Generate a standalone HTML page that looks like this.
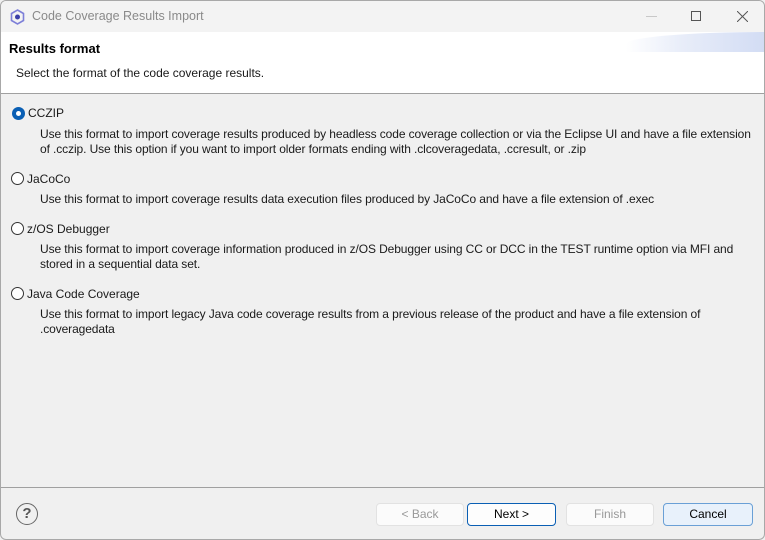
<!DOCTYPE html>
<html><head><meta charset="utf-8"><style>
*{margin:0;padding:0;box-sizing:border-box}
body{width:765px;height:540px;overflow:hidden;background:#f0f0f0;font-family:"Liberation Sans",sans-serif;font-size:12px;color:#1a1a1a;position:relative}
.win{position:absolute;left:0;top:0;width:765px;height:540px;border:1px solid #a8a8a8;border-radius:6px;overflow:hidden;background:#f0f0f0}
.title{position:absolute;left:0;top:0;width:765px;height:31px;background:#f3f3f3}
.title span{position:absolute;left:31px;top:8px;color:#8a8a8a;font-size:12.5px}
.hdr{position:absolute;left:0;top:31px;width:765px;height:62px;background:#fff;border-bottom:1px solid #a0a0a0}
.grad{position:absolute;right:0;top:0;width:140px;height:20px;background:linear-gradient(90deg,rgba(230,236,250,0) 0%,#e8edf9 40%,#d2dcf4 100%);border-top-left-radius:140px 12px}
.t{position:absolute;white-space:nowrap}
.d{letter-spacing:-0.1px}
.radio{position:absolute;width:13px;height:13px;border:1px solid #333;border-radius:50%;background:#fff}
.radio.on{border:none;background:#0a5fb4}
.radio.on:after{content:"";position:absolute;left:4px;top:4px;width:5px;height:5px;border-radius:50%;background:#fff}
.sep{position:absolute;left:0;top:486px;width:765px;height:1px;background:#a0a0a0}
.btn{position:absolute;top:502px;height:23px;border:1px solid #d0d0d0;border-radius:4px;background:#fbfbfb;text-align:center;line-height:21px;font-size:12px}
</style></head><body><div class="win">
<div class="title">
<svg style="position:absolute;left:9px;top:8px" width="15" height="16" viewBox="0 0 15 16"><path d="M7.5 1L13.5 4.5V11.5L7.5 15L1.5 11.5V4.5Z" fill="none" stroke="#7d7fd8" stroke-width="1.6"/><circle cx="7.5" cy="8" r="2.5" fill="#3b3fa8"/></svg>
<span>Code Coverage Results Import</span>
<div style="position:absolute;left:645px;top:15px;width:11px;height:1px;background:#c8c8c8"></div>
<div style="position:absolute;left:690px;top:10px;width:10px;height:10px;border:1px solid #555"></div>
<svg style="position:absolute;left:736px;top:10px" width="11" height="11"><path d="M0 0L11 11M11 0L0 11" stroke="#555" stroke-width="1"/></svg>
</div>
<div class="hdr"><div class="grad"></div>
<div class="t" style="left:8px;top:9px;font-weight:bold;font-size:13px;color:#000">Results format</div>
<div class="t" style="left:15px;top:34px">Select the format of the code coverage results.</div>
</div>
<div class="radio on" style="left:11px;top:106px"></div>
<div class="t" style="left:27px;top:105px">CCZIP</div>
<div class="t d" style="left:39px;top:126px">Use this format to import coverage results produced by headless code coverage collection or via the Eclipse UI and have a file extension</div>
<div class="t d" style="left:39px;top:141px">of .cczip. Use this option if you want to import older formats ending with .clcoveragedata, .ccresult, or .zip</div>
<div class="radio" style="left:10px;top:171px"></div>
<div class="t" style="left:26px;top:171px">JaCoCo</div>
<div class="t d" style="left:39px;top:191px">Use this format to import coverage results data execution files produced by JaCoCo and have a file extension of .exec</div>
<div class="radio" style="left:10px;top:221px"></div>
<div class="t" style="left:26px;top:221px">z/OS Debugger</div>
<div class="t d" style="left:39px;top:241px">Use this format to import coverage information produced in z/OS Debugger using CC or DCC in the TEST runtime option via MFI and</div>
<div class="t d" style="left:39px;top:256px">stored in a sequential data set.</div>
<div class="radio" style="left:10px;top:286px"></div>
<div class="t" style="left:26px;top:286px">Java Code Coverage</div>
<div class="t d" style="left:39px;top:306px">Use this format to import legacy Java code coverage results from a previous release of the product and have a file extension of</div>
<div class="t d" style="left:39px;top:321px">.coveragedata</div>
<div class="sep"></div>
<div style="position:absolute;left:15px;top:502px;width:22px;height:22px;border:1.5px solid #666;border-radius:50%;text-align:center;font-weight:bold;font-size:15px;line-height:19px;color:#555">?</div>
<div class="btn" style="left:375px;width:88px;color:#999;border-color:#e2e2e2">&lt; Back</div>
<div class="btn" style="left:466px;width:89px;border-color:#0a5fb4;background:#fdfdfd;color:#000">Next &gt;</div>
<div class="btn" style="left:565px;width:88px;color:#999;border-color:#e2e2e2">Finish</div>
<div class="btn" style="left:662px;width:90px;border-color:#6aa0d6;background:#e8f1fb;color:#000">Cancel</div>
</div></body></html>
